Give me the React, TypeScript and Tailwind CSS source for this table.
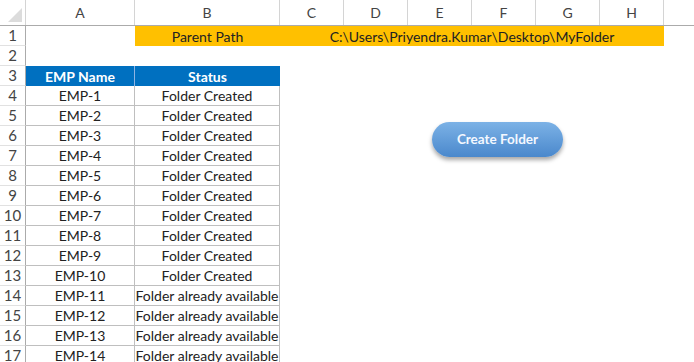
import React from 'react';

const COLS = [
  { key: 'A', w: 'w-[109px]' },
  { key: 'B', w: 'w-[145px]' },
  { key: 'C', w: 'w-[64px]' },
  { key: 'D', w: 'w-[64px]' },
  { key: 'E', w: 'w-[64px]' },
  { key: 'F', w: 'w-[64px]' },
  { key: 'G', w: 'w-[64px]' },
  { key: 'H', w: 'w-[64px]' },
];

const rows = [
  ...Array.from({ length: 10 }, (_, i) => ({ name: `EMP-${i + 1}`, status: 'Folder Created' })),
  ...Array.from({ length: 4 }, (_, i) => ({ name: `EMP-${i + 11}`, status: 'Folder already available' })),
];

const RowNum: React.FC<{ n: number }> = ({ n }) => (
  <div className="w-[26px] shrink-0 h-full flex items-center justify-center border-r border-b border-r-[#ababab] border-b-[#e1e1e1] text-[#444] text-[15px]">
    {n}
  </div>
);

const App: React.FC = () => {
  return (
    <div className="relative w-[694px] h-[362px] overflow-hidden bg-white text-[14px] text-[#222]" style={{ fontFamily: 'Lato, "Liberation Sans", sans-serif' }}>
      {/* column headers */}
      <div className="flex h-[26px] border-b border-[#ababab]">
        <div className="w-[26px] shrink-0 border-r border-[#d4d4d4] flex items-end justify-end p-[3px]">
          <svg width="14" height="14" viewBox="0 0 14 14">
            <polygon points="14,0 14,14 0,14" fill="#dcdcdc" />
          </svg>
        </div>
        {COLS.map(c => (
          <div key={c.key} className={`${c.w} shrink-0 border-r border-[#d4d4d4] flex items-center justify-center text-[#444]`}>
            {c.key}
          </div>
        ))}
        <div className="flex-1" />
      </div>

      {/* row 1 */}
      <div className="flex h-[20px]">
        <RowNum n={1} />
        <div className="w-[109px] shrink-0" />
        <div className="w-[145px] shrink-0 bg-[#ffc000] flex items-center justify-center">Parent Path</div>
        <div className="w-[384px] shrink-0 bg-[#ffc000] flex items-center justify-center">C:\Users\Priyendra.Kumar\Desktop\MyFolder</div>
      </div>

      {/* row 2 */}
      <div className="flex h-[20px]">
        <RowNum n={2} />
      </div>

      {/* row 3 - table header */}
      <div className="flex h-[20px]">
        <RowNum n={3} />
        <div className="w-[109px] shrink-0 bg-[#0070c0] text-white font-bold flex items-center justify-center border-r border-[#8fb4e3]">EMP Name</div>
        <div className="w-[145px] shrink-0 bg-[#0070c0] text-white font-bold flex items-center justify-center">Status</div>
      </div>

      {rows.map((r, i) => (
        <div key={r.name} className="flex h-[20px]">
          <RowNum n={i + 4} />
          <div className="w-[109px] shrink-0 border-r border-b border-[#bfbfbf] flex items-center justify-center">{r.name}</div>
          <div className="w-[145px] shrink-0 border-r border-b border-[#bfbfbf] flex items-center justify-center whitespace-nowrap">{r.status}</div>
        </div>
      ))}

      {/* shape button over the sheet */}
      <button className="absolute left-[432px] top-[122px] w-[131px] h-[35px] rounded-full bg-gradient-to-b from-[#7cb2e6] to-[#4a88cc] text-[#f4f8ff] font-bold text-[13.5px] shadow-[0_3px_4px_rgba(0,0,0,0.35)]">
        Create Folder
      </button>
    </div>
  );
};

export default App;
